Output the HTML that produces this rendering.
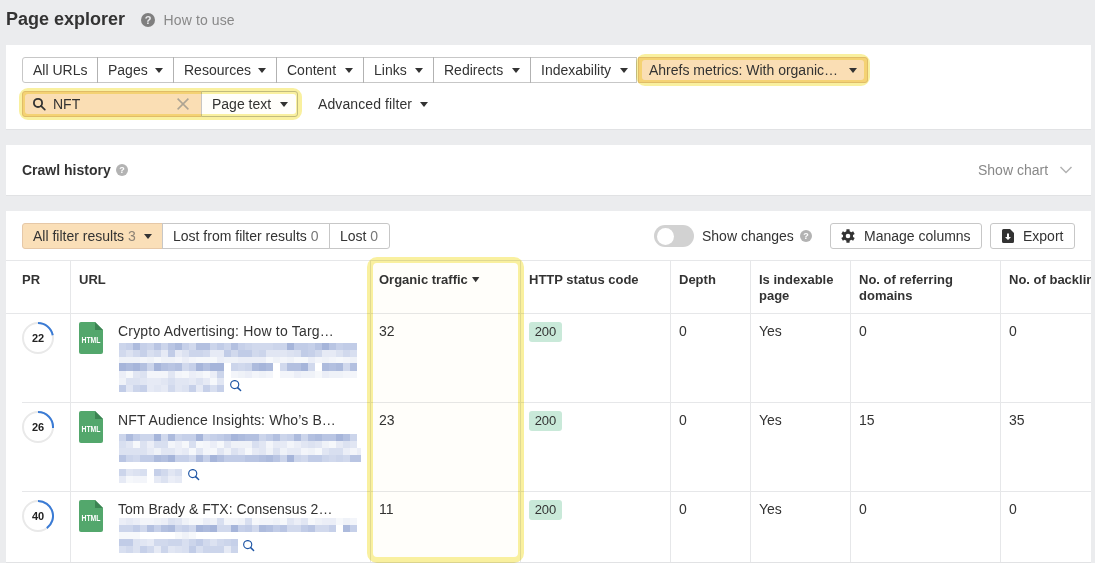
<!DOCTYPE html>
<html><head><meta charset="utf-8">
<style>
*{box-sizing:border-box;margin:0;padding:0}
html,body{width:1095px;height:563px;overflow:hidden;background:#ebecee;font-family:"Liberation Sans",sans-serif;color:#333;font-size:14px}
.abs{position:absolute}
.panel{position:absolute;left:6px;width:1085px;background:#fff;box-shadow:0 1px 0 #e1e2e4}
.title{position:absolute;left:6px;top:8px;font-size:18px;font-weight:bold;color:#333;line-height:22px}
.how{position:absolute;left:163.5px;top:11px;font-size:14px;color:#888;line-height:18px;letter-spacing:.12px}
.qicon{position:absolute;border-radius:50%;color:#ebecee;font-weight:bold;text-align:center}
.btn{position:absolute;height:26px;border:1px solid #c7c7c7;background:#fff;font-size:14px;line-height:24px;color:#333;white-space:nowrap}
.car{position:absolute;width:0;height:0;border-left:4px solid transparent;border-right:4px solid transparent;border-top:5px solid #333}
.hl{position:absolute;border:6px solid #f9f09f;border-radius:9px;mix-blend-mode:multiply;background:#fffefa}

.vline{position:absolute;width:1px;background:#e6e7e9}
.hline{position:absolute;height:1px;background:#e6e7e9}
.hd{position:absolute;font-size:13px;font-weight:bold;color:#333;line-height:16px}
.cell{position:absolute;font-size:14px;line-height:18px;color:#333;white-space:nowrap}
.badge{position:absolute;width:33px;height:20px;background:#c9e9d9;border-radius:3px;font-size:13px;line-height:20px;text-align:center;color:#333}
.blur{position:absolute;height:13px;background:#d6dcee}
</style></head><body>
<div class="title">Page explorer</div>
<div class="qicon" style="left:141px;top:13px;width:14px;height:14px;background:#7f7f7f;font-size:11px;line-height:14px">?</div>
<div class="how">How to use</div>

<!-- panel 1 -->
<div class="panel" style="top:45px;height:84px"></div>
<div class="btn" style="left:22px;top:57px;width:76px;border-radius:3px 0 0 3px;padding-left:10px">All URLs</div>
<div class="btn" style="left:97px;top:57px;width:77px;padding-left:10px">Pages<i class="car" style="left:57px;top:10px"></i></div>
<div class="btn" style="left:173px;top:57px;width:104px;padding-left:10px">Resources<i class="car" style="left:84px;top:10px"></i></div>
<div class="btn" style="left:276px;top:57px;width:88px;padding-left:10px">Content<i class="car" style="left:68px;top:10px"></i></div>
<div class="btn" style="left:363px;top:57px;width:71px;padding-left:10px">Links<i class="car" style="left:51px;top:10px"></i></div>
<div class="btn" style="left:433px;top:57px;width:98px;padding-left:10px">Redirects<i class="car" style="left:78px;top:10px"></i></div>
<div class="btn" style="left:530px;top:57px;width:107px;padding-left:10px">Indexability<i class="car" style="left:89px;top:10px"></i></div>
<div class="btn" style="left:638px;top:57px;width:230px;padding-left:10px;background:#fadfb8;border-color:#e6c8a7;border-radius:0 3px 3px 0">Ahrefs metrics: With organic…<i class="car" style="left:210px;top:10px"></i></div>

<div class="btn" style="left:22px;top:91px;width:180px;background:#fadfb8;border-color:#e6c8a7;border-radius:3px 0 0 3px;padding-left:30px">NFT</div>
<svg class="abs" style="left:32px;top:97px" width="14" height="14" viewBox="0 0 14 14"><circle cx="6" cy="5.9" r="4.1" fill="none" stroke="#333" stroke-width="1.8"/><path d="M9 8.9L12.8 12.6" stroke="#333" stroke-width="1.7" stroke-linecap="round"/></svg>
<svg class="abs" style="left:177px;top:98px" width="12" height="12" viewBox="0 0 12 12"><path d="M0.6 0.6L11.4 11.4M11.4 0.6L0.6 11.4" stroke="#ada596" stroke-width="1.5"/></svg>
<div class="btn" style="left:201px;top:91px;width:97px;border-radius:0 3px 3px 0;padding-left:10px">Page text<i class="car" style="left:78px;top:10px"></i></div>
<div class="cell" style="left:318px;top:95px;letter-spacing:.1px">Advanced filter</div><i class="car" style="left:420px;top:102px"></i>

<!-- panel 2 -->
<div class="panel" style="top:145px;height:50px"></div>
<div class="cell" style="left:22px;top:161px;font-weight:bold">Crawl history</div>
<div class="qicon" style="left:116px;top:164px;width:12px;height:12px;background:#b3b3b3;color:#fff;font-size:9px;line-height:12px">?</div>
<div class="cell" style="left:978px;top:161px;color:#888">Show chart</div>
<svg class="abs" style="left:1059px;top:165px" width="14" height="10" viewBox="0 0 14 10"><path d="M1.5 2L7 7.5L12.5 2" fill="none" stroke="#b2b2b2" stroke-width="1.5"/></svg>

<!-- panel 3 -->
<div class="panel" style="top:211px;height:351px"></div>
<div class="btn" style="left:22px;top:223px;width:141px;background:#fadfb8;border-color:#e6c8a7;border-radius:3px 0 0 3px;padding-left:10px">All filter results <span style="color:#8d8375">3</span><i class="car" style="left:121px;top:10px"></i></div>
<div class="btn" style="left:162px;top:223px;width:168px;padding-left:10px">Lost from filter results <span style="color:#777">0</span></div>
<div class="btn" style="left:329px;top:223px;width:61px;border-radius:0 3px 3px 0;padding-left:10px">Lost <span style="color:#777">0</span></div>

<div class="abs" style="left:654px;top:225px;width:40px;height:22px;border-radius:11px;background:#d2d2d2"></div>
<div class="abs" style="left:656.5px;top:227.5px;width:17px;height:17px;border-radius:9px;background:#fff"></div>
<div class="cell" style="left:702px;top:227px">Show changes</div>
<div class="qicon" style="left:800px;top:230px;width:12px;height:12px;background:#b3b3b3;color:#fff;font-size:9px;line-height:12px">?</div>
<div class="btn" style="left:830px;top:223px;width:152px;border-radius:3px;padding-left:33px">Manage columns</div>
<div class="btn" style="left:990px;top:223px;width:85px;border-radius:3px;padding-left:32px">Export</div>

<!-- table -->
<div class="hline" style="left:6px;top:260px;width:1085px"></div>
<div class="hline" style="left:6px;top:313px;width:1085px"></div>
<div class="hline" style="left:22px;top:402px;width:1069px"></div>
<div class="hline" style="left:22px;top:491px;width:1069px"></div>
<div class="vline" style="left:70px;top:260px;height:302px"></div>
<div class="vline" style="left:370px;top:260px;height:302px"></div>
<div class="vline" style="left:520px;top:260px;height:302px"></div>
<div class="vline" style="left:670px;top:260px;height:302px"></div>
<div class="vline" style="left:750px;top:260px;height:302px"></div>
<div class="vline" style="left:850px;top:260px;height:302px"></div>
<div class="vline" style="left:1000px;top:260px;height:302px"></div>


<div class="hd" style="top:272px;left:22px">PR</div>
<div class="hd" style="top:272px;left:79px">URL</div>
<div class="hd" style="top:272px;left:379px">Organic traffic<svg class="abs" style="left:92.5px;top:5px" width="8" height="6" viewBox="0 0 8 6"><path d="M0 0H7.4L3.7 5.2Z" fill="#333"/></svg></div>
<div class="hd" style="top:272px;left:529px">HTTP status code</div>
<div class="hd" style="top:272px;left:679px">Depth</div>
<div class="hd" style="top:272px;left:759px">Is indexable<br>page</div>
<div class="hd" style="top:272px;left:859px">No. of referring<br>domains</div>
<div class="hd" style="top:272px;left:1009px;width:82px;overflow:hidden;white-space:nowrap">No. of backlinks</div>

<!-- row 1 -->
<div class="cell" style="left:118px;top:322px;letter-spacing:.19px">Crypto Advertising: How to Targ…</div>
<div class="cell" style="left:379px;top:322px">32</div>
<div class="badge" style="left:529px;top:322px">200</div>
<div class="cell" style="left:679px;top:322px">0</div>
<div class="cell" style="left:759px;top:322px">Yes</div>
<div class="cell" style="left:859px;top:322px">0</div>
<div class="cell" style="left:1009px;top:322px">0</div>
<!-- row 2 -->
<div class="cell" style="left:118px;top:411px;letter-spacing:.12px">NFT Audience Insights: Who’s B…</div>
<div class="cell" style="left:379px;top:411px">23</div>
<div class="badge" style="left:529px;top:411px">200</div>
<div class="cell" style="left:679px;top:411px">0</div>
<div class="cell" style="left:759px;top:411px">Yes</div>
<div class="cell" style="left:859px;top:411px">15</div>
<div class="cell" style="left:1009px;top:411px">35</div>
<!-- row 3 -->
<div class="cell" style="left:118px;top:500px;letter-spacing:.015px">Tom Brady &amp; FTX: Consensus 2…</div>
<div class="cell" style="left:379px;top:500px">11</div>
<div class="badge" style="left:529px;top:500px">200</div>
<div class="cell" style="left:679px;top:500px">0</div>
<div class="cell" style="left:759px;top:500px">Yes</div>
<div class="cell" style="left:859px;top:500px">0</div>
<div class="cell" style="left:1009px;top:500px">0</div>

<svg class="abs" style="left:0;top:0" width="1095" height="563" viewBox="0 0 1095 563"><path fill="#ccd5eb" d="M119 343h7v7h-7zM147 343h7v7h-7zM161 343h7v7h-7zM210 343h7v7h-7zM224 343h7v7h-7zM245 343h7v7h-7zM273 343h7v7h-7zM280 343h7v7h-7zM189 350h7v7h-7zM196 350h7v7h-7zM259 350h7v7h-7zM147 363h7v8h-7zM231 363h7v8h-7zM245 363h7v8h-7zM217 371h7v7h-7zM133 385h7v7h-7zM119 434h7v7h-7zM140 434h7v7h-7zM147 434h7v7h-7zM175 434h7v7h-7zM203 434h7v7h-7zM259 434h7v7h-7zM280 434h7v7h-7zM301 434h7v7h-7zM350 434h7v7h-7zM126 455h7v7h-7zM280 455h7v7h-7zM294 455h7v7h-7zM322 455h7v7h-7zM336 455h7v7h-7zM119 469h7v7h-7zM119 525h7v7h-7zM126 525h7v7h-7zM175 525h7v7h-7zM168 539h7v7h-7zM175 539h7v7h-7zM189 539h7v7h-7zM224 539h7v7h-7zM161 546h7v7h-7zM203 546h7v7h-7zM210 546h7v7h-7zM217 546h7v7h-7zM231 546h7v7h-7z"/><path fill="#c6d0e9" d="M126 343h7v7h-7zM140 343h7v7h-7zM182 343h7v7h-7zM238 343h7v7h-7zM308 343h7v7h-7zM336 343h7v7h-7zM140 350h7v7h-7zM308 350h7v7h-7zM189 363h7v8h-7zM140 385h7v7h-7zM189 385h7v7h-7zM203 385h7v7h-7zM217 385h7v7h-7zM182 434h7v7h-7zM189 434h7v7h-7zM210 434h7v7h-7zM287 434h7v7h-7zM175 455h7v7h-7zM182 455h7v7h-7zM203 455h7v7h-7zM154 469h7v7h-7zM154 525h7v7h-7zM182 525h7v7h-7zM238 525h7v7h-7zM329 525h7v7h-7zM350 525h7v7h-7zM231 539h7v7h-7zM140 546h7v7h-7z"/><path fill="#adbbdd" d="M133 343h7v7h-7zM175 343h7v7h-7zM126 363h7v8h-7zM252 363h7v8h-7zM266 363h7v8h-7zM322 363h7v8h-7zM336 363h7v8h-7zM126 434h7v7h-7zM168 434h7v7h-7zM238 434h7v7h-7zM294 434h7v7h-7zM315 434h7v7h-7zM154 455h7v7h-7zM196 455h7v7h-7zM266 455h7v7h-7zM168 525h7v7h-7zM203 525h7v7h-7zM259 525h7v7h-7zM343 525h7v7h-7z"/><path fill="#b9c5e3" d="M154 343h7v7h-7zM168 343h7v7h-7zM315 343h7v7h-7zM329 343h7v7h-7zM168 363h7v8h-7zM224 434h7v7h-7zM322 434h7v7h-7zM329 434h7v7h-7zM119 455h7v7h-7zM245 455h7v7h-7zM252 455h7v7h-7zM273 455h7v7h-7zM350 455h7v7h-7zM357 455h4v7h-4zM280 525h7v7h-7zM308 525h7v7h-7z"/><path fill="#d1d9ed" d="M189 343h7v7h-7zM252 343h7v7h-7zM259 343h7v7h-7zM266 343h7v7h-7zM119 350h7v7h-7zM133 350h7v7h-7zM154 350h7v7h-7zM203 350h7v7h-7zM231 350h7v7h-7zM252 350h7v7h-7zM315 350h7v7h-7zM343 350h7v7h-7zM182 363h7v8h-7zM238 363h7v8h-7zM280 363h7v8h-7zM308 363h7v8h-7zM343 363h7v8h-7zM168 385h7v7h-7zM161 434h7v7h-7zM133 455h7v7h-7zM189 455h7v7h-7zM301 455h7v7h-7zM329 455h7v7h-7zM343 455h7v7h-7zM161 469h7v7h-7zM140 525h7v7h-7zM189 525h7v7h-7zM217 525h7v7h-7zM224 525h7v7h-7zM252 525h7v7h-7zM287 525h7v7h-7zM294 525h7v7h-7zM315 525h7v7h-7zM322 525h7v7h-7zM154 539h7v7h-7zM161 539h7v7h-7zM203 539h7v7h-7zM217 539h7v7h-7zM126 546h7v7h-7zM147 546h7v7h-7z"/><path fill="#b3c0e0" d="M196 343h7v7h-7zM203 343h7v7h-7zM231 343h7v7h-7zM140 363h7v8h-7zM161 363h7v8h-7zM175 363h7v8h-7zM203 363h7v8h-7zM287 363h7v8h-7zM294 363h7v8h-7zM329 363h7v8h-7zM350 363h7v8h-7zM245 434h7v7h-7zM252 434h7v7h-7zM273 434h7v7h-7zM308 434h7v7h-7zM343 434h7v7h-7zM161 455h7v7h-7zM217 455h7v7h-7zM259 455h7v7h-7zM147 525h7v7h-7zM161 525h7v7h-7zM266 525h7v7h-7z"/><path fill="#c1cce7" d="M217 343h7v7h-7zM294 343h7v7h-7zM301 343h7v7h-7zM343 343h7v7h-7zM350 343h7v7h-7zM168 350h7v7h-7zM224 350h7v7h-7zM238 350h7v7h-7zM245 350h7v7h-7zM301 350h7v7h-7zM119 385h7v7h-7zM133 434h7v7h-7zM217 434h7v7h-7zM266 434h7v7h-7zM140 455h7v7h-7zM147 455h7v7h-7zM224 455h7v7h-7zM231 455h7v7h-7zM238 455h7v7h-7zM308 455h7v7h-7zM315 455h7v7h-7zM133 525h7v7h-7zM245 525h7v7h-7zM273 525h7v7h-7zM301 525h7v7h-7zM119 539h7v7h-7zM126 539h7v7h-7zM196 539h7v7h-7zM189 546h7v7h-7z"/><path fill="#a6b5da" d="M287 343h7v7h-7zM322 343h7v7h-7zM119 363h7v8h-7zM133 363h7v8h-7zM154 363h7v8h-7zM196 363h7v8h-7zM210 363h7v8h-7zM217 363h7v8h-7zM259 363h7v8h-7zM301 363h7v8h-7zM154 434h7v7h-7zM196 434h7v7h-7zM231 434h7v7h-7zM336 434h7v7h-7zM168 455h7v7h-7zM210 455h7v7h-7zM287 455h7v7h-7zM196 525h7v7h-7zM210 525h7v7h-7zM231 525h7v7h-7z"/><path fill="#dce2f1" d="M126 350h7v7h-7zM182 350h7v7h-7zM287 350h7v7h-7zM336 350h7v7h-7zM140 371h7v7h-7zM126 378h7v7h-7zM133 378h7v7h-7zM196 378h7v7h-7zM182 385h7v7h-7zM140 441h7v7h-7zM308 441h7v7h-7zM343 441h7v7h-7zM119 448h7v7h-7zM126 448h7v7h-7zM133 448h7v7h-7zM140 448h7v7h-7zM231 448h7v7h-7zM273 448h7v7h-7zM133 469h7v7h-7zM161 476h7v7h-7zM168 518h7v7h-7zM133 539h7v7h-7zM210 539h7v7h-7zM133 546h7v7h-7zM175 546h7v7h-7z"/><path fill="#d8dff0" d="M147 350h7v7h-7zM294 350h7v7h-7zM350 350h7v7h-7zM168 378h7v7h-7zM210 385h7v7h-7zM119 441h7v7h-7zM154 441h7v7h-7zM161 441h7v7h-7zM189 441h7v7h-7zM252 441h7v7h-7zM329 448h7v7h-7zM336 448h7v7h-7zM140 469h7v7h-7zM175 469h7v7h-7zM217 518h7v7h-7zM245 518h7v7h-7zM182 539h7v7h-7zM119 546h7v7h-7zM182 546h7v7h-7zM196 546h7v7h-7z"/><path fill="#e6eaf5" d="M161 350h7v7h-7zM175 350h7v7h-7zM210 350h7v7h-7zM217 350h7v7h-7zM322 350h7v7h-7zM329 350h7v7h-7zM147 378h7v7h-7zM154 378h7v7h-7zM189 378h7v7h-7zM203 378h7v7h-7zM147 385h7v7h-7zM161 385h7v7h-7zM196 385h7v7h-7zM273 441h7v7h-7zM280 441h7v7h-7zM336 441h7v7h-7zM147 448h7v7h-7zM182 448h7v7h-7zM238 448h7v7h-7zM252 448h7v7h-7zM287 448h7v7h-7zM294 448h7v7h-7zM119 476h7v7h-7zM154 476h7v7h-7zM175 476h7v7h-7zM126 518h7v7h-7zM147 539h7v7h-7zM154 546h7v7h-7zM224 546h7v7h-7z"/><path fill="#e1e6f3" d="M266 350h7v7h-7zM273 350h7v7h-7zM280 350h7v7h-7zM133 371h7v7h-7zM168 371h7v7h-7zM140 378h7v7h-7zM161 378h7v7h-7zM175 378h7v7h-7zM182 378h7v7h-7zM217 378h7v7h-7zM126 385h7v7h-7zM154 385h7v7h-7zM175 385h7v7h-7zM126 441h7v7h-7zM224 441h7v7h-7zM259 441h7v7h-7zM301 441h7v7h-7zM315 441h7v7h-7zM350 441h7v7h-7zM161 448h7v7h-7zM168 448h7v7h-7zM196 448h7v7h-7zM217 448h7v7h-7zM259 448h7v7h-7zM322 448h7v7h-7zM126 469h7v7h-7zM168 469h7v7h-7zM175 518h7v7h-7zM287 518h7v7h-7zM301 518h7v7h-7zM140 539h7v7h-7zM168 546h7v7h-7z"/><path fill="#eff2f8" d="M119 357h7v6h-7zM126 357h7v6h-7zM133 357h7v6h-7zM147 357h7v6h-7zM161 357h7v6h-7zM168 357h7v6h-7zM224 357h7v6h-7zM231 357h7v6h-7zM273 357h7v6h-7zM287 357h7v6h-7zM322 357h7v6h-7zM350 357h7v6h-7zM196 371h7v7h-7zM238 371h7v7h-7zM259 371h7v7h-7zM301 371h7v7h-7zM308 371h7v7h-7zM329 371h7v7h-7zM336 371h7v7h-7zM119 378h7v7h-7zM231 441h7v7h-7zM238 441h7v7h-7zM245 441h7v7h-7zM322 441h7v7h-7zM154 448h7v7h-7zM224 448h7v7h-7zM266 448h7v7h-7zM280 448h7v7h-7zM308 448h7v7h-7zM154 518h7v7h-7zM182 518h7v7h-7zM210 518h7v7h-7zM238 518h7v7h-7zM273 518h7v7h-7zM315 518h7v7h-7zM343 518h7v7h-7zM182 532h7v7h-7z"/><path fill="#f3f5fa" d="M140 357h7v6h-7zM175 357h7v6h-7zM189 357h7v6h-7zM280 357h7v6h-7zM315 357h7v6h-7zM329 357h7v6h-7zM343 357h7v6h-7zM147 371h7v7h-7zM154 371h7v7h-7zM161 371h7v7h-7zM175 371h7v7h-7zM231 371h7v7h-7zM252 371h7v7h-7zM266 371h7v7h-7zM280 371h7v7h-7zM287 371h7v7h-7zM343 371h7v7h-7zM350 371h7v7h-7zM168 441h7v7h-7zM203 441h7v7h-7zM266 441h7v7h-7zM287 441h7v7h-7zM203 448h7v7h-7zM301 448h7v7h-7zM350 448h7v7h-7zM133 476h7v7h-7zM140 476h7v7h-7zM140 518h7v7h-7zM147 518h7v7h-7zM224 518h7v7h-7zM231 518h7v7h-7zM259 518h7v7h-7zM266 518h7v7h-7zM350 518h7v7h-7z"/><path fill="#f6f8fb" d="M154 357h7v6h-7zM196 357h7v6h-7zM203 357h7v6h-7zM210 357h7v6h-7zM266 357h7v6h-7zM294 357h7v6h-7zM301 357h7v6h-7zM336 357h7v6h-7zM126 371h7v7h-7zM182 371h7v7h-7zM203 371h7v7h-7zM315 371h7v7h-7zM210 378h7v7h-7zM133 441h7v7h-7zM182 441h7v7h-7zM196 441h7v7h-7zM217 441h7v7h-7zM329 441h7v7h-7zM189 448h7v7h-7zM210 448h7v7h-7zM245 448h7v7h-7zM315 448h7v7h-7zM126 476h7v7h-7zM189 518h7v7h-7zM196 518h7v7h-7zM252 518h7v7h-7zM280 518h7v7h-7zM308 518h7v7h-7zM336 518h7v7h-7zM119 532h7v7h-7zM126 532h7v7h-7zM133 532h7v7h-7zM175 532h7v7h-7zM189 532h7v7h-7z"/><path fill="#ebeef7" d="M182 357h7v6h-7zM217 357h7v6h-7zM238 357h7v6h-7zM245 357h7v6h-7zM252 357h7v6h-7zM259 357h7v6h-7zM308 357h7v6h-7zM119 371h7v7h-7zM189 371h7v7h-7zM210 371h7v7h-7zM245 371h7v7h-7zM294 371h7v7h-7zM322 371h7v7h-7zM147 441h7v7h-7zM175 441h7v7h-7zM210 441h7v7h-7zM294 441h7v7h-7zM175 448h7v7h-7zM343 448h7v7h-7zM357 448h4v7h-4zM168 476h7v7h-7zM119 518h7v7h-7zM133 518h7v7h-7zM161 518h7v7h-7zM203 518h7v7h-7zM294 518h7v7h-7zM322 518h7v7h-7zM329 518h7v7h-7z"/></svg>
<svg class="abs" style="left:22px;top:322px" width="32" height="32" viewBox="0 0 32 32"><circle cx="16" cy="16" r="15" fill="none" stroke="#e9e9e9" stroke-width="2"/><path d="M16 1A15 15 0 0 1 30.73 13.19" fill="none" stroke="#3a7bd5" stroke-width="2"/><text x="16" y="20" text-anchor="middle" font-family="Liberation Sans, sans-serif" font-size="11" font-weight="bold" fill="#222">22</text></svg>
<svg class="abs" style="left:79px;top:322px" width="24" height="32" viewBox="0 0 24 32"><path d="M2 0H16L24 8V30a2 2 0 0 1-2 2H2a2 2 0 0 1-2-2V2a2 2 0 0 1 2-2Z" fill="#53a76c"/><path d="M16 0L24 8H16Z" fill="#3c8453"/><text x="2.5" y="21" textLength="19" lengthAdjust="spacingAndGlyphs" font-family="Liberation Sans, sans-serif" font-size="9.8" font-weight="bold" fill="#fff">HTML</text></svg>
<svg class="abs" style="left:229.8px;top:379.9px" width="12" height="12" viewBox="0 0 12 12"><circle cx="4.7" cy="4.6" r="4.05" fill="none" stroke="#1f56a5" stroke-width="1.15"/><path d="M7.7 7.6L10.6 10.5" stroke="#1f56a5" stroke-width="1.5" stroke-linecap="round"/></svg>
<svg class="abs" style="left:22px;top:411px" width="32" height="32" viewBox="0 0 32 32"><circle cx="16" cy="16" r="15" fill="none" stroke="#e9e9e9" stroke-width="2"/><path d="M16 1A15 15 0 0 1 30.97 16.94" fill="none" stroke="#3a7bd5" stroke-width="2"/><text x="16" y="20" text-anchor="middle" font-family="Liberation Sans, sans-serif" font-size="11" font-weight="bold" fill="#222">26</text></svg>
<svg class="abs" style="left:79px;top:411px" width="24" height="32" viewBox="0 0 24 32"><path d="M2 0H16L24 8V30a2 2 0 0 1-2 2H2a2 2 0 0 1-2-2V2a2 2 0 0 1 2-2Z" fill="#53a76c"/><path d="M16 0L24 8H16Z" fill="#3c8453"/><text x="2.5" y="21" textLength="19" lengthAdjust="spacingAndGlyphs" font-family="Liberation Sans, sans-serif" font-size="9.8" font-weight="bold" fill="#fff">HTML</text></svg>
<svg class="abs" style="left:187.8px;top:468.8px" width="12" height="12" viewBox="0 0 12 12"><circle cx="4.7" cy="4.6" r="4.05" fill="none" stroke="#1f56a5" stroke-width="1.15"/><path d="M7.7 7.6L10.6 10.5" stroke="#1f56a5" stroke-width="1.5" stroke-linecap="round"/></svg>
<svg class="abs" style="left:22px;top:500px" width="32" height="32" viewBox="0 0 32 32"><circle cx="16" cy="16" r="15" fill="none" stroke="#e9e9e9" stroke-width="2"/><path d="M16 1A15 15 0 0 1 24.82 28.14" fill="none" stroke="#3a7bd5" stroke-width="2"/><text x="16" y="20" text-anchor="middle" font-family="Liberation Sans, sans-serif" font-size="11" font-weight="bold" fill="#222">40</text></svg>
<svg class="abs" style="left:79px;top:500px" width="24" height="32" viewBox="0 0 24 32"><path d="M2 0H16L24 8V30a2 2 0 0 1-2 2H2a2 2 0 0 1-2-2V2a2 2 0 0 1 2-2Z" fill="#53a76c"/><path d="M16 0L24 8H16Z" fill="#3c8453"/><text x="2.5" y="21" textLength="19" lengthAdjust="spacingAndGlyphs" font-family="Liberation Sans, sans-serif" font-size="9.8" font-weight="bold" fill="#fff">HTML</text></svg>
<svg class="abs" style="left:242.8px;top:539.8px" width="12" height="12" viewBox="0 0 12 12"><circle cx="4.7" cy="4.6" r="4.05" fill="none" stroke="#1f56a5" stroke-width="1.15"/><path d="M7.7 7.6L10.6 10.5" stroke="#1f56a5" stroke-width="1.5" stroke-linecap="round"/></svg>
<svg class="abs" style="left:841px;top:229px" width="14" height="14" viewBox="0 0 14 14"><path fill-rule="evenodd" fill="#333" d="M5.34 2.18L5.43 0.18L8.57 0.18L8.66 2.18L10.35 3.15L12.12 2.23L13.69 4.95L12.01 6.03L12.01 7.97L13.69 9.05L12.12 11.77L10.35 10.85L8.66 11.82L8.57 13.82L5.43 13.82L5.34 11.82L3.65 10.85L1.88 11.77L0.31 9.05L1.99 7.97L1.99 6.03L0.31 4.95L1.88 2.23L3.65 3.15ZM4.70 7a2.3 2.3 0 1 0 4.6 0a2.3 2.3 0 1 0 -4.6 0Z"/></svg>
<svg class="abs" style="left:1002px;top:229px" width="12" height="14" viewBox="0 0 12 14"><path fill="#333" d="M1.5 0H8L12 4V12.5a1.5 1.5 0 0 1-1.5 1.5H1.5A1.5 1.5 0 0 1 0 12.5V1.5A1.5 1.5 0 0 1 1.5 0Z"/><path fill="#fff" d="M5 4.5H7V8H9L6 11L3 8H5Z"/></svg>
<div class="abs" style="left:97px;top:57px;width:1px;height:26px;background:#b2b2b2"></div><div class="abs" style="left:173px;top:57px;width:1px;height:26px;background:#b2b2b2"></div><div class="abs" style="left:276px;top:57px;width:1px;height:26px;background:#b2b2b2"></div><div class="abs" style="left:363px;top:57px;width:1px;height:26px;background:#b2b2b2"></div><div class="abs" style="left:433px;top:57px;width:1px;height:26px;background:#b2b2b2"></div><div class="abs" style="left:530px;top:57px;width:1px;height:26px;background:#b2b2b2"></div>
<div class="hl" style="left:636px;top:54px;width:234px;height:32px"></div>
<div class="hl" style="left:19px;top:88px;width:283px;height:32px"></div>
<div class="hl" style="left:367px;top:257px;width:157px;height:306px;border-radius:10px"></div>
<div class="abs" style="left:1091px;top:0;width:4px;height:563px;background:#ebecee"></div>
</body></html>
